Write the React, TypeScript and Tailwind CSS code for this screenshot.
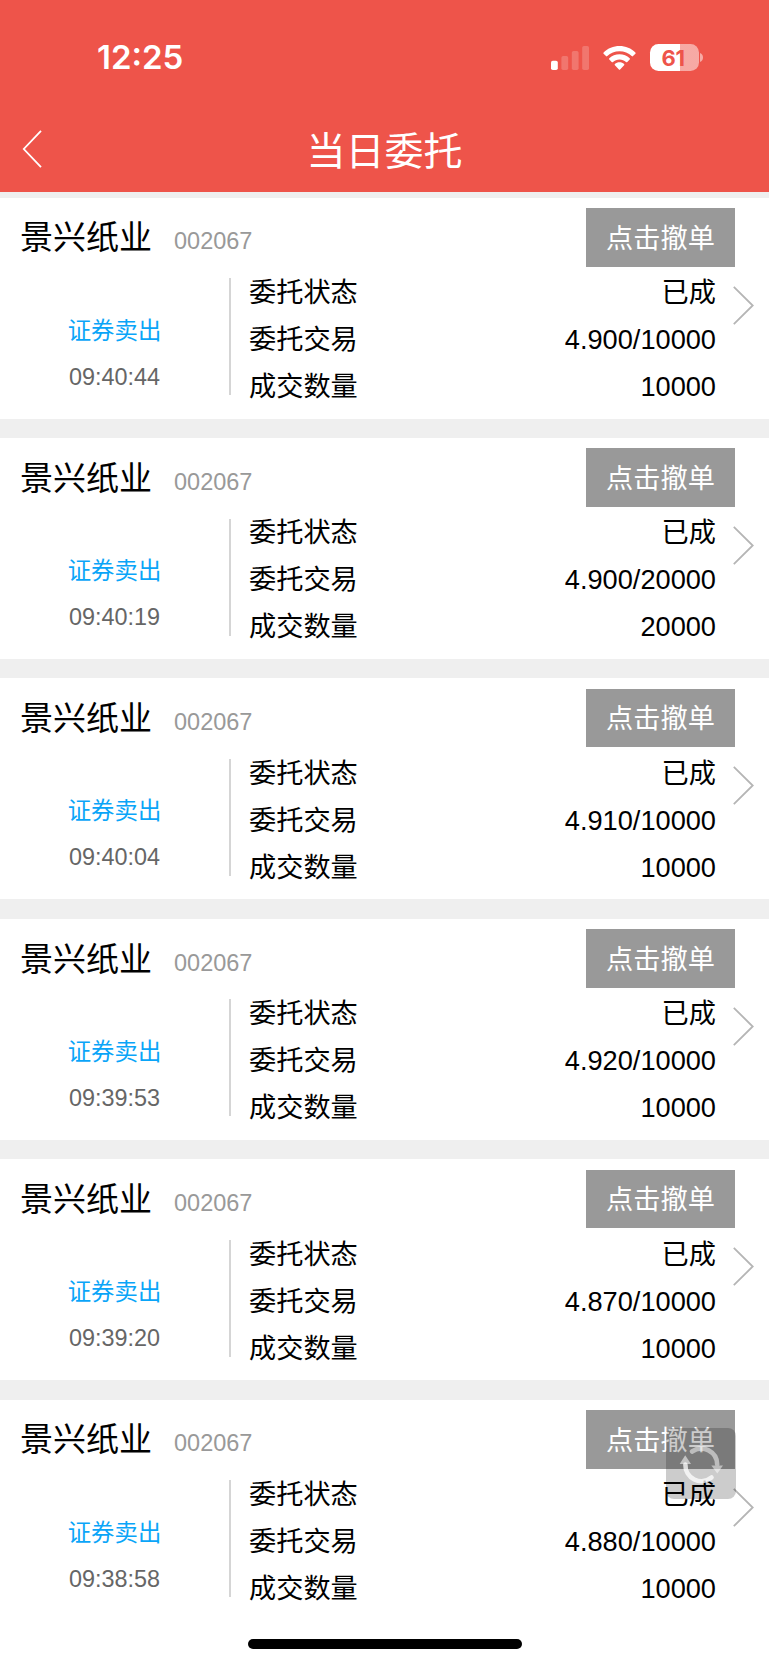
import React from 'react';

type Order = {
  time: string;
  price: string;
  amount: string;
};

const orders: Order[] = [
  { time: '09:40:44', price: '4.900', amount: '10000' },
  { time: '09:40:19', price: '4.900', amount: '20000' },
  { time: '09:40:04', price: '4.910', amount: '10000' },
  { time: '09:39:53', price: '4.920', amount: '10000' },
  { time: '09:39:20', price: '4.870', amount: '10000' },
  { time: '09:38:58', price: '4.880', amount: '10000' },
];

function StatusIcons() {
  return (
    <div className="flex items-center">
      <svg className="w-[38px] h-6" viewBox="0 0 38 24" fill="#fff">
        <rect x="0" y="14.8" width="6.8" height="9.2" rx="1.8" />
        <g opacity="0.2">
          <rect x="10.4" y="10" width="6.8" height="14" rx="1.8" />
          <rect x="20.8" y="5" width="6.8" height="19" rx="1.8" />
          <rect x="31.2" y="0" width="6.8" height="24" rx="1.8" />
        </g>
      </svg>
      <svg className="w-[33px] h-6 ml-[14px]" viewBox="0 0 33 24" fill="#fff">
        <path d="M16.5 0C22.6 0 28.2 2.4 32.4 6.4c.4.4.4.9 0 1.3l-2.4 2.4c-.4.4-.9.4-1.3 0C25.5 7 21.2 5.2 16.5 5.2S7.5 7 4.300 10.100c-.4.4-.9.4-1.300 0L.6 7.700c-.4-.4-.4-.9 0-1.300C4.800 2.400 10.400 0 16.500 0Z" />
        <path d="M16.500 8.200c3.900 0 7.500 1.500 10.200 4 .4.4.4.9 0 1.300l-2.400 2.400c-.4.4-.9.4-1.300 0-1.700-1.600-4-2.500-6.500-2.500s-4.800.9-6.500 2.500c-.4.4-.9.4-1.300 0l-2.400-2.400c-.4-.4-.4-.9 0-1.300 2.700-2.500 6.300-4 10.200-4Z" />
        <path d="M16.500 16.300c1.800 0 3.400.6 4.600 1.700.4.4.4.9 0 1.300l-4 4.200c-.3.4-.9.4-1.200 0l-4-4.200c-.4-.4-.4-.9 0-1.300 1.200-1.100 2.800-1.700 4.600-1.700Z" />
      </svg>
      <div className="flex items-center ml-[14px]">
        <div className="flex items-center justify-center w-[49px] h-[27px] pr-[2px] rounded-[8.5px] bg-linear-to-r from-white from-62% to-white/50 to-62% font-[Inter,sans-serif] text-[22px] tracking-[-0.5px] leading-none font-bold text-[#ee544a]">
          61
        </div>
        <svg className="w-[3px] h-[9px] ml-[1.5px]" viewBox="0 0 3 9">
          <path d="M0 0C2 .8 3 2.5 3 4.5S2 8.2 0 9Z" fill="#fff" opacity="0.5" />
        </svg>
      </div>
    </div>
  );
}

function Header() {
  return (
    <header className="h-[192px] shrink-0 bg-[#ee544a] text-white">
      <div className="h-[115px] flex items-center justify-between pl-[97px] pr-[66px]">
        <span className="font-[Inter,sans-serif] text-[33px] leading-none font-semibold">12:25</span>
        <StatusIcons />
      </div>
      <div className="h-[70px] grid grid-cols-[100px_1fr_100px] items-center">
        <svg className="w-5 h-[38px] ml-[22px] mt-[-2px]" viewBox="0 0 20 38" fill="none" stroke="#fff" strokeWidth="1.8">
          <path d="M19 .8 1.8 19 19 37.2" />
        </svg>
        <h1 className="pt-[3px] text-center text-[39px] leading-none">当日委托</h1>
      </div>
    </header>
  );
}

function DetailRow({ label, value }: { label: string; value: string }) {
  return (
    <div className="flex h-[47px] items-center justify-between pt-px text-[27.2px] leading-none">
      <span>{label}</span>
      <span>{value}</span>
    </div>
  );
}

function OrderCard({ order }: { order: Order }) {
  return (
    <section className="h-[221px] shrink-0 bg-white">
      <div className="flex h-[71px] pt-[10.4px] pl-5 pr-[34px] justify-between">
        <div className="flex items-baseline pt-[1.5px] leading-[58px]">
          <h2 className="text-[33px]">景兴纸业</h2>
          <span className="ml-[22px] text-[23.5px] text-[#999]">002067</span>
        </div>
        <button className="w-[149px] h-[58.6px] pt-[2px] bg-[#999] text-white text-[27.2px] leading-none">
          点击撤单
        </button>
      </div>
      <div className="flex">
        <div className="w-[229px] pt-[38px] text-center text-[23.4px] leading-[47px]">
          <p className="pt-px -mb-px text-[#0aa5f8]">证券卖出</p>
          <p className="text-[#666]">{order.time}</p>
        </div>
        <div className="w-[2px] h-[117px] mt-[9.7px] bg-[#d5d5d5]" />
        <div className="flex-1 pl-[18px]">
          <DetailRow label="委托状态" value="已成" />
          <DetailRow label="委托交易" value={`${order.price}/${order.amount}`} />
          <DetailRow label="成交数量" value={order.amount} />
        </div>
        <svg className="w-[21px] h-[39px] mt-[17px] ml-[17px] mr-[15px]" viewBox="0 0 21 39" fill="none" stroke="#b5b5b5" strokeWidth="1.8">
          <path d="M.8.8 19.7 19.5.8 38.2" />
        </svg>
      </div>
    </section>
  );
}

function RefreshButton() {
  return (
    <button className="absolute left-[666px] top-[1428px] w-[70px] h-[71px] rounded-lg bg-black/20 flex items-center justify-center">
      <svg className="w-[44px] h-[44px]" viewBox="0 0 44 44" fill="none">
        <g opacity="0.5">
          <path d="M13 9.5A16 16 0 0 1 38.2 22.6" stroke="#fff" strokeWidth="4.6" strokeLinecap="round" />
          <path d="M32.3 23.500H44L38.300 31.500Z" fill="#fff" />
        </g>
        <g>
          <path d="M6.400 22.600A16 16 0 0 0 32.500 35.500" stroke="#fff" strokeOpacity="0.75" strokeWidth="4.600" strokeLinecap="round" />
          <path d="M.7 22H12L6.200 13.300Z" fill="#fff" fillOpacity="0.55" />
        </g>
      </svg>
    </button>
  );
}

export default function App() {
  return (
    <div
      lang="zh-CN"
      className="relative flex flex-col w-[769px] h-[1665px] overflow-hidden bg-white text-black font-['Liberation_Sans','Noto_Sans_CJK_SC',sans-serif]"
    >
      <Header />
      <main className="flex flex-col h-[1411px] shrink-0 overflow-hidden gap-[19.4px] pt-[5.6px] bg-[#efefef]">
        {orders.map((order) => (
          <OrderCard key={order.time} order={order} />
        ))}
      </main>
      <footer className="flex-1 flex justify-center pt-[36px]">
        <div className="w-[274px] h-[10px] rounded-full bg-black" />
      </footer>
      <RefreshButton />
    </div>
  );
}
